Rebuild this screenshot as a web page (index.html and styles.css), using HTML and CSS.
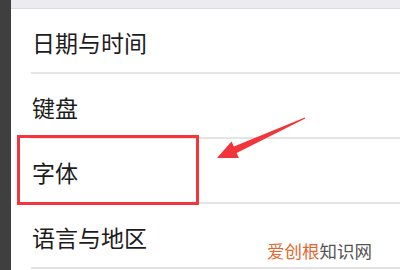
FILE: index.html
```html
<!DOCTYPE html>
<html lang="zh">
<head>
<meta charset="utf-8">
<link rel="stylesheet" href="styles.css">
</head>
<body>
<div class="screen">
  <div class="side"></div>
  <div class="main">
    <div class="topbar"></div>
    <div class="list">
      <div class="row"><span class="label">日期与时间</span></div>
      <div class="row"><span class="label">键盘</span></div>
      <div class="row"><span class="label">字体</span></div>
      <div class="row"><span class="label">语言与地区</span></div>
    </div>
  </div>
  <div class="highlight"></div>
  <svg class="arrow" width="400" height="270" viewBox="0 0 400 270">
    <polygon points="217,158 231.5,141.5 233.9,146.4 304.8,117.4 305.3,118.6 236.6,152.9 238.9,158" fill="#f2353b"/>
  </svg>
  <div class="watermark"><span class="wm-a">爱创根</span><span class="wm-b">知识网</span></div>
</div>
</body>
</html>
```
FILE: styles.css
```css
html, body {
  margin: 0;
  padding: 0;
  background: #ffffff;
}
.screen {
  position: relative;
  width: 400px;
  height: 270px;
  overflow: hidden;
  display: flex;
  font-family: "Noto Sans CJK SC", "Noto Sans", sans-serif;
}
.side {
  width: 11px;
  flex: none;
  background: #3f3f3f;
}
.main {
  flex: 1;
  display: flex;
  flex-direction: column;
  background: #ffffff;
}
.topbar {
  height: 8px;
  background: #ececf0;
  border-bottom: 1px solid #dadade;
}
.list {
  display: flex;
  flex-direction: column;
}
.row {
  margin-left: 20px;
  border-bottom: 2px solid #e4e4e4;
  display: flex;
  align-items: center;
  padding-top: 3px;
  height: 60px;
}
.label {
  font-size: 23px;
  line-height: 1;
  color: #1c1c1c;
  margin-left: 1px;
}
.highlight {
  position: absolute;
  left: 17px;
  top: 135px;
  width: 176px;
  height: 64px;
  border: 3px solid #f4363c;
}
.arrow {
  position: absolute;
  left: 0;
  top: 0;
}
.watermark {
  position: absolute;
  left: 267px;
  top: 242px;
  font-size: 17.5px;
  line-height: 1;
  font-family: "Noto Sans CJK SC", sans-serif;
}
.wm-a {
  color: #e2682c;
}
.wm-b {
  color: #555555;
}
```
